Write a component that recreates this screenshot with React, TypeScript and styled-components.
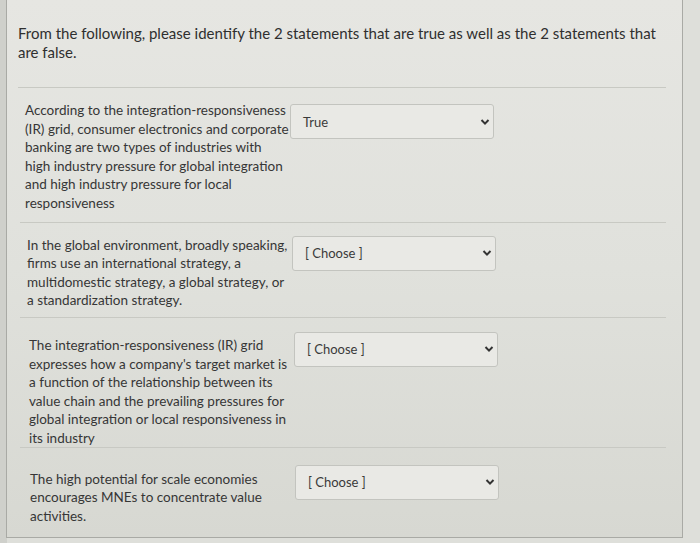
import styled, { createGlobalStyle } from "styled-components"

const GlobalStyle = createGlobalStyle`
    html, body {
        margin: 0;
        padding: 0;
        background: linear-gradient(90deg, #cfd0cb 0, #cfd0cb 7px, #dedfda 7px);
        font-family: Lato, "Open Sans", sans-serif;
    }
`

const Page = styled.div`
    width: 700px;
    height: 543px;
    overflow: hidden;
    display: flex;
`

const Panel = styled.div`
    margin-left: 6px;
    width: 677px;
    height: 538px;
    border-left: 1px solid #a9aaa5;
    border-right: 1px solid #a9aaa5;
    border-bottom: 1px solid #a9aaa5;
    background: linear-gradient(180deg, #e6e6e2 0%, #e0e1dc 50%, #d7d8d2 100%);
    box-sizing: border-box;
    padding: 24px 16px 0 11px;
`

const Title = styled.p`
    margin: 0;
    font-size: 15px;
    line-height: 19px;
    color: #2f2f2f;
    padding-bottom: 25px;
    border-bottom: 1px solid #c8c9c3;
`

const Row = styled.div<{ $last?: boolean; $indent: number }>`
    display: grid;
    grid-template-columns: 265px 204px;
    align-items: start;
    margin-left: 2px;
    padding: 13px 0 9px ${(p) => 5 + p.$indent}px;
    border-bottom: ${(p) => (p.$last ? "none" : "1px solid #c8c9c3")};
`

const Statement = styled.div<{ $top: number; $bottom: number }>`
    font-size: 13.5px;
    line-height: 18.6px;
    color: #363636;
    white-space: nowrap;
    padding-top: ${(p) => p.$top}px;
    margin-bottom: ${(p) => p.$bottom}px;
`

const Select = styled.div<{ $top: number }>`
    margin-top: ${(p) => p.$top}px;
    height: 35px;
    box-sizing: border-box;
    border: 1px solid #c3c4bf;
    border-radius: 3px;
    background: #e9e9e5;
    display: flex;
    align-items: center;
    justify-content: space-between;
    padding: 0 3px 0 12px;
    font-size: 13px;
    color: #3a3a3a;
`

const Chevron = () => (
    <svg width="10" height="8" viewBox="0 0 10 8">
        <path d="M1.5 2 L5 5.6 L8.5 2" fill="none" stroke="#333" strokeWidth="2" />
    </svg>
)

type Item = {
    lines: string[]
    answer: string
    top: number
    bottom: number
    selectTop: number
    indent: number
}

const items: Item[] = [
    {
        lines: [
            "According to the integration-responsiveness",
            "(IR) grid, consumer electronics and corporate",
            "banking are two types of industries with",
            "high industry pressure for global integration",
            "and high industry pressure for local",
            "responsiveness",
        ],
        answer: "True",
        top: 0,
        bottom: 0,
        selectTop: 3,
        indent: 0,
    },
    {
        lines: [
            "In the global environment, broadly speaking,",
            "firms use an international strategy, a",
            "multidomestic strategy, a global strategy, or",
            "a standardization strategy.",
        ],
        answer: "[ Choose ]",
        top: 0,
        bottom: -2,
        selectTop: 0,
        indent: 2,
    },
    {
        lines: [
            "The integration-responsiveness (IR) grid",
            "expresses how a company's target market is",
            "a function of the relationship between its",
            "value chain and the prevailing pressures for",
            "global integration or local responsiveness in",
            "its industry",
        ],
        answer: "[ Choose ]",
        top: 5,
        bottom: -10,
        selectTop: 1,
        indent: 4,
    },
    {
        lines: [
            "The high potential for scale economies",
            "encourages MNEs to concentrate value",
            "activities.",
        ],
        answer: "[ Choose ]",
        top: 9,
        bottom: 0,
        selectTop: 4,
        indent: 5,
    },
]

export default function App() {
    return (
        <>
            <GlobalStyle />
            <Page>
                <Panel>
                    <Title>
                        From the following, please identify the 2 statements that are true as well as the 2 statements that
                        <br />
                        are false.
                    </Title>
                    {items.map((item, i) => (
                        <Row key={i} $last={i === items.length - 1} $indent={item.indent}>
                            <Statement $top={item.top} $bottom={item.bottom}>
                                {item.lines.map((l, j) => (
                                    <div key={j}>{l}</div>
                                ))}
                            </Statement>
                            <Select $top={item.selectTop}>
                                <span>{item.answer}</span>
                                <Chevron />
                            </Select>
                        </Row>
                    ))}
                </Panel>
            </Page>
        </>
    )
}
